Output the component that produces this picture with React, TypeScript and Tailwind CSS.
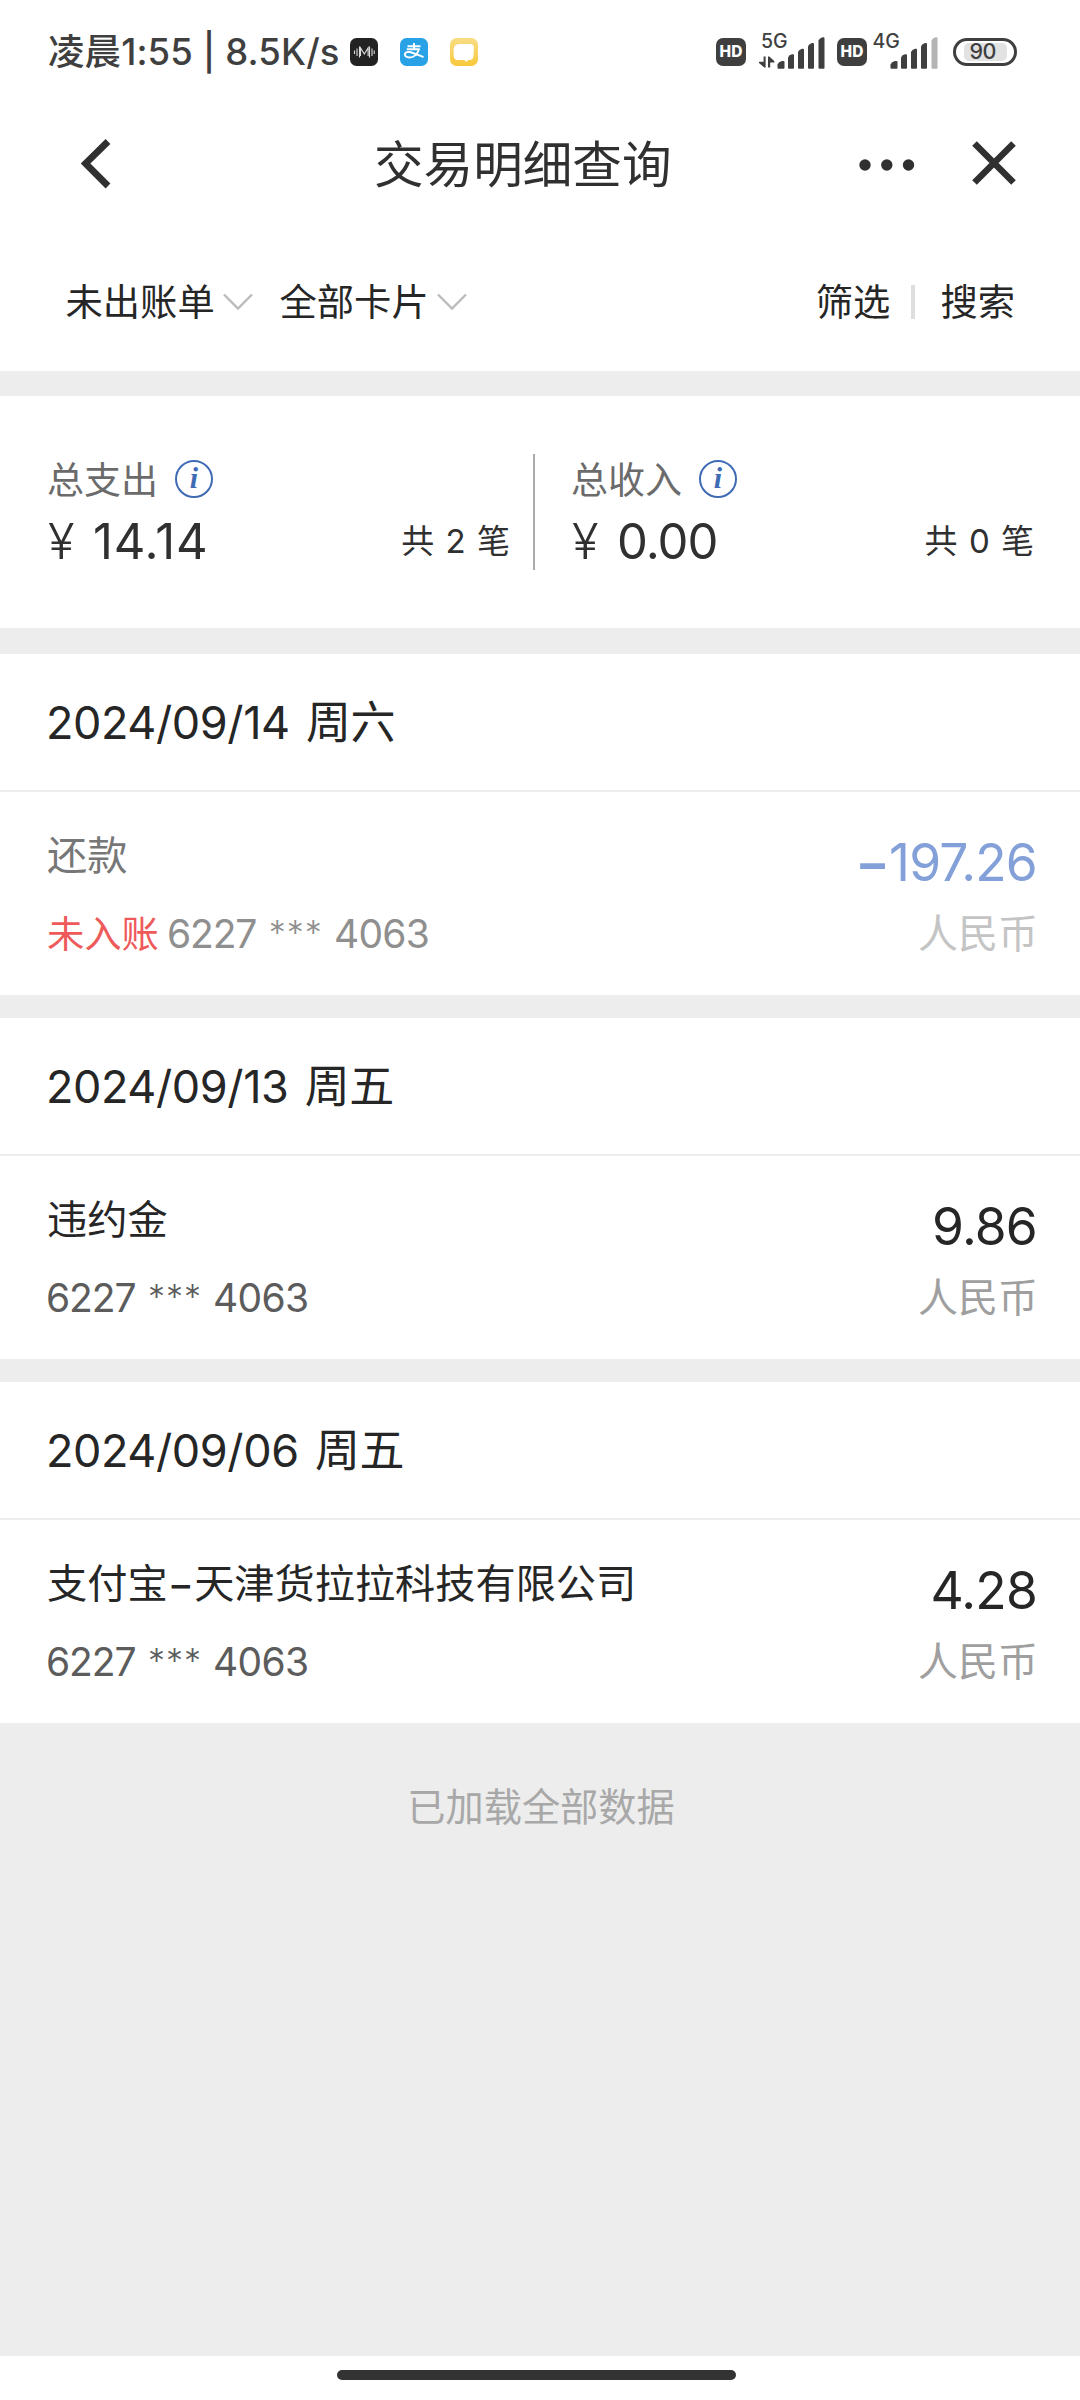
import type { ReactNode } from 'react'

type Transaction = {
  date: string
  title: string
  card: [string, string]
  amount: string
  currency: string
  pending?: boolean
}

const TRANSACTIONS: Transaction[] = [
  { date: '2024/09/14 周六', title: '还款', card: ['6227', '4063'], amount: '197.26', currency: '人民币', pending: true },
  { date: '2024/09/13 周五', title: '违约金', card: ['6227', '4063'], amount: '9.86', currency: '人民币' },
  { date: '2024/09/06 周五', title: '支付宝−天津货拉拉科技有限公司', card: ['6227', '4063'], amount: '4.28', currency: '人民币' },
]

function HdBadge() {
  return (
    <div className="flex h-[28px] w-[30px] shrink-0 items-center justify-center rounded-[7px] bg-[#3f3f3f] text-[15.500px] leading-none font-extrabold text-white">
      HD
    </div>
  )
}

function SignalBars({ network, data, lastOff }: { network: string; data?: boolean; lastOff?: boolean }) {
  return (
    <svg width="66" height="40" viewBox="0 0 66 40" className="shrink-0 overflow-visible" fill="#3f3f3f">
      <text x={data ? 2 : 0.5} y="15.500" fontSize="19.5" fontWeight="500">{network}</text>
      {data && (
        <path d="M4.600 24.500h2v11H5.200L0 31v-1.200h4.600zM9 24.500h1.400l5 4.800v1.200h-4.200v5H9z" />
      )}
      <path d="M18.500 36v-3.500q1-2.600 4.500-3.500h1.500q1 0 1 1v6q0 .8-1 .8h-5q-1 0-1-.8z" />
      <path d="M29 36V25.500q1-2.600 4-3.200h1q1 0 1 1V36q0 .8-1 .8h-4q-1 0-1-.8z" />
      <path d="M39 36V20q1-2.600 4-3.300h1q1 0 1 1V36q0 .8-1 .8h-4q-1 0-1-.8z" />
      <path d="M49 36V14.300q1-2.600 4-3.300h1q1 0 1 1V36q0 .8-1 .8h-4q-1 0-1-.8z" />
      <path d="M59.500 36V8.500q1-2.600 4-3.300h1q1 0 1 1V36q0 .8-1 .8h-4q-1 0-1-.8z" fill={lastOff ? '#b4b4b4' : '#3f3f3f'} />
    </svg>
  )
}

function StatusBar() {
  return (
    <div className="flex h-[103px] shrink-0 items-center pr-[63px] pl-[48px] text-[#3f3f3f]">
      <div className="w-[302px] pt-[1px] text-[36.500px] leading-none font-medium tracking-[0.100px] whitespace-nowrap">
        凌晨1:55 | 8.5K/s
      </div>
      <div className="flex items-center gap-[22px]">
        <svg width="28" height="28" viewBox="0 0 28 28">
          <rect width="28" height="28" rx="6.500" fill="#222" />
          <path d="M4.500 12.500v3.500M7 10.500v7.500M9.500 8.500v11M10.500 18V10l3.800 6 3.800-6v8M19.500 8.500v11M22 10.500v7.500M24.200 12.500v3.500" fill="none" stroke="#ddd" strokeWidth="1.100" />
        </svg>
        <svg width="28" height="28" viewBox="0 0 28 28">
          <rect width="28" height="28" rx="6.500" fill="#29a1e6" />
          <path d="M7.500 8.200h13M14 5v6M6.800 11.200h13M19 11.500c-1.500 4-5 8-9.500 8-3 0-4.800-1.400-4.600-3.200.2-1.700 2-2.600 4.300-2.300 4.400.6 8.800 3.200 14.300 5.200" fill="none" stroke="#fff" strokeWidth="1.900" />
        </svg>
        <svg width="28" height="28" viewBox="0 0 28 28">
          <defs>
            <linearGradient id="note" x1="0" y1="0" x2="0" y2="1">
              <stop offset="0" stopColor="#f8dd86" />
              <stop offset="1" stopColor="#f9c93c" />
            </linearGradient>
          </defs>
          <rect width="28" height="28" rx="6.500" fill="url(#note)" />
          <path d="M9 6h11q4 0 3.800 4l-.3 8q-.3 4-4 4h-1.500l-1.500 2-2-2H8q-4 0-4.300-4L3.500 12Q4 6 9 6z" fill="#fff" />
        </svg>
      </div>
      <div className="ml-auto flex items-center">
        <HdBadge />
        <div className="mr-[11px] ml-[13px] h-[40px] w-[67px]">
          <SignalBars network="5G" data />
        </div>
        <HdBadge />
        <div className="ml-[5px] h-[40px] w-[81px]">
          <SignalBars network="4G" lastOff />
        </div>
        <div className="flex h-[28px] w-[64px] items-center rounded-full border-[3px] border-[#3f3f3f] px-[7.500px]">
          <div className="flex h-[18px] w-[47px] items-center rounded-[5px] bg-[#e2e2e2] pl-[6px] text-[21.500px] leading-none font-medium tracking-[-0.500px]">
            90
          </div>
        </div>
      </div>
    </div>
  )
}

function NavBar() {
  return (
    <div className="grid h-[123px] shrink-0 grid-cols-[374px_1fr_374px] items-center text-[#303030]">
      <svg width="30" height="54" viewBox="0 0 30 54" className="ml-[81px]">
        <path d="M27 3.500L4.500 25.500L27 48" fill="none" stroke="currentColor" strokeWidth="6.800" />
      </svg>
      <h1 className="pt-[3px] text-[49.600px] leading-none whitespace-nowrap">交易明细查询</h1>
      <div className="flex items-center">
        <svg width="56" height="12" viewBox="0 0 56 12" className="ml-[153px]" fill="currentColor">
          <circle cx="6" cy="6" r="5.700" />
          <circle cx="27.800" cy="6" r="5.700" />
          <circle cx="49.500" cy="6" r="5.700" />
        </svg>
        <svg width="44" height="47" viewBox="0 0 44 47" className="ml-[57px]">
          <path d="M2.500 2.500l39 39M41.500 2.500l-39 39" stroke="currentColor" strokeWidth="6.500" />
        </svg>
      </div>
    </div>
  )
}

function FilterDrop({ children }: { children: ReactNode }) {
  return (
    <div className="flex w-[214px] items-center gap-[8px]">
      <span>{children}</span>
      <svg width="30" height="18" viewBox="0 0 30 18">
        <path d="M1 1.500l14 14 14-14" fill="none" stroke="#bcbcbc" strokeWidth="2.400" />
      </svg>
    </div>
  )
}

function FilterBar() {
  return (
    <div className="flex h-[145px] shrink-0 items-center pt-[8px] pr-[65px] pl-[65.500px] text-[37.300px] leading-none whitespace-nowrap text-[#262626]">
      <FilterDrop>未出账单</FilterDrop>
      <FilterDrop>全部卡片</FilterDrop>
      <div className="ml-auto flex items-center">
        <span>筛选</span>
        <span className="mr-[25px] ml-[21px] h-[34px] w-[4px] bg-[#dedede]" />
        <span>搜索</span>
      </div>
    </div>
  )
}

function SummaryItem({ label, amount, count, tracking }: { label: string; amount: string; count: number; tracking: string }) {
  return (
    <div className="w-[464px] pt-[6px]">
      <div className="flex h-[38px] items-center text-[37px] leading-none text-[#6b6b6b]">
        <span className="w-[128px] pt-[2px] whitespace-nowrap">{label}</span>
        <span className="flex h-[38px] w-[38px] items-center justify-center rounded-full border-[2.500px] border-[#3f6bb5] pb-[2px] font-['Liberation_Serif'] text-[30px] leading-none font-bold text-[#3f6bb5] italic">
          i
        </span>
      </div>
      <div className="mt-[18px] flex h-[50px] items-center justify-between whitespace-nowrap text-[#303030]">
        <div className="flex items-center text-[49px] leading-none">
          <span className="ml-px w-[45px] font-light">¥</span>
          <span className={tracking}>{amount}</span>
        </div>
        <span className="text-[33px] leading-none tracking-[1px]">共 {count} 笔</span>
      </div>
    </div>
  )
}

function Summary() {
  return (
    <div className="flex h-[232px] shrink-0 pt-[58px] pl-[47px]">
      <SummaryItem label="总支出" amount="14.14" count={2} tracking="tracking-[0.800px]" />
      <div className="mr-[36px] ml-[22px] h-[116px] w-[2px] bg-[#ababab]" />
      <SummaryItem label="总收入" amount="0.00" count={0} tracking="tracking-[-1px]" />
    </div>
  )
}

function TransactionGroup({ date, title, card, amount, currency, pending }: Transaction) {
  return (
    <section className="bg-white">
      <div className="flex h-[138px] items-center border-b-2 border-[#ededed] pl-[46px] text-[45px] leading-none tracking-[-0.400px] text-[#262626] [word-spacing:4px]">
        {date}
      </div>
      <div className="flex h-[203px] justify-between pr-[43px] pl-[46px] whitespace-nowrap">
        <div className="flex flex-col pt-[44px]">
          <span className={`ml-px text-[40.200px] leading-[40px] ${pending ? 'text-[#777]' : 'text-[#262626]'}`}>{title}</span>
          <span className={`mt-[38px] text-[39px] leading-[40px] tracking-[-0.700px] ${pending ? 'text-[#8f8f8f]' : 'text-[#5c5c5c]'}`}>
            {pending && <span className="mr-[8px] ml-px text-[37.300px] tracking-normal text-[#ee5a5a]">未入账</span>}
            <span className="tracking-[-1.100px]">{card[0]}</span>
            <span className="mr-[11px] ml-[12.500px] align-[3px] text-[34px] leading-none font-light tracking-[1px]">***</span>
            {card[1]}
          </span>
        </div>
        <div className="flex flex-col items-end pt-[44px]">
          <span className={`text-[51.500px] leading-[52px] tracking-[-0.800px] ${pending ? 'text-[#84a0d8]' : 'text-[#262626]'}`}>
            {pending && <span className="font-semibold">−</span>}
            {amount}
          </span>
          <span className={`-mr-px mt-[26px] text-[40px] leading-[40px] ${pending ? 'text-[#c4c4c4]' : 'text-[#9f9f9f]'}`}>{currency}</span>
        </div>
      </div>
    </section>
  )
}

export default function App() {
  return (
    <div className="flex h-[2400px] w-[1080px] flex-col overflow-hidden bg-white font-['Inter','Noto_Sans_CJK_SC',sans-serif]">
      <StatusBar />
      <NavBar />
      <FilterBar />
      <div className="h-[25px] shrink-0 bg-[#ededed]" />
      <Summary />
      <div className="flex flex-1 flex-col gap-[23px] bg-[#ededed] pt-[26px]">
        {TRANSACTIONS.map((item) => (
          <TransactionGroup key={item.date} {...item} />
        ))}
        <p className="mt-[41px] ml-[2px] text-center text-[38.200px] leading-[40px] text-[#a8a8a8]">已加载全部数据</p>
      </div>
      <div className="flex h-[44px] shrink-0 justify-center bg-white pt-[14px]">
        <div className="mr-[7px] h-[10px] w-[399px] rounded-full bg-[#333]" />
      </div>
    </div>
  )
}
